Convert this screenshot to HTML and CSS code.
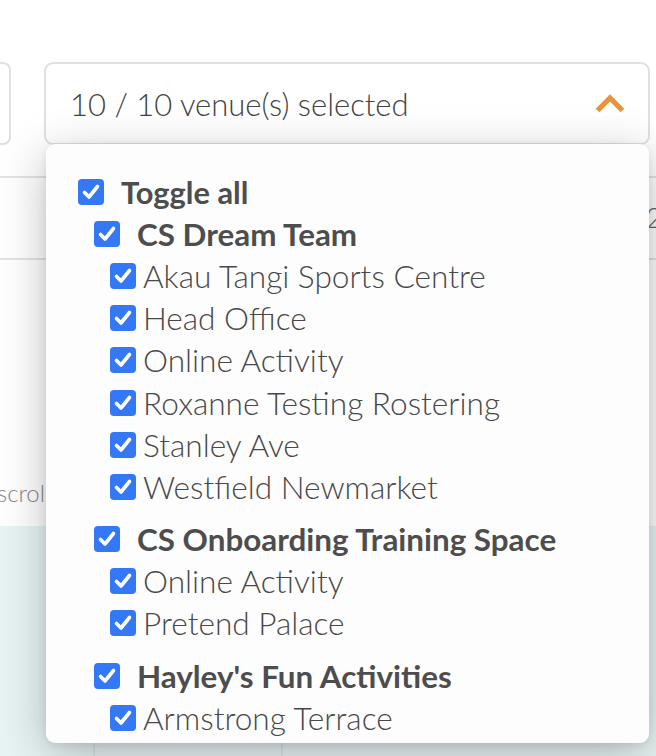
FILE: index.html
```html
<!DOCTYPE html>
<html>
<head>
<meta charset="utf-8">
<link rel="stylesheet" href="styles.css">
</head>
<body>
<div class="page">
  <div class="filters">
    <div class="left-box"></div>
    <div class="select-wrap">
      <div class="select">
        <span class="select-text">10 / 10 venue(s) selected</span>
        <svg class="chevron" width="32" height="22" viewBox="0 0 32 22"><path d="M3.5 18.5 L16 6 L28.5 18.5" fill="none" stroke="#e8943a" stroke-width="5.2" stroke-linejoin="miter" stroke-linecap="butt"/></svg>
      </div>
      <div class="dropdown">
        <div class="row level0 strong"><span class="cb"><svg viewBox="0 0 26 26"><path d="M6.5 13.5 L11 18 L19.5 7.5"/></svg></span><span class="label">Toggle all</span></div>
        <div class="row level1 strong"><span class="cb"><svg viewBox="0 0 26 26"><path d="M6.5 13.5 L11 18 L19.5 7.5"/></svg></span><span class="label">CS Dream Team</span></div>
        <div class="row level2"><span class="cb"><svg viewBox="0 0 26 26"><path d="M6.5 13.5 L11 18 L19.5 7.5"/></svg></span><span class="label">Akau Tangi Sports Centre</span></div>
        <div class="row level2"><span class="cb"><svg viewBox="0 0 26 26"><path d="M6.5 13.5 L11 18 L19.5 7.5"/></svg></span><span class="label">Head Office</span></div>
        <div class="row level2"><span class="cb"><svg viewBox="0 0 26 26"><path d="M6.5 13.5 L11 18 L19.5 7.5"/></svg></span><span class="label">Online Activity</span></div>
        <div class="row level2"><span class="cb"><svg viewBox="0 0 26 26"><path d="M6.5 13.5 L11 18 L19.5 7.5"/></svg></span><span class="label">Roxanne Testing Rostering</span></div>
        <div class="row level2"><span class="cb"><svg viewBox="0 0 26 26"><path d="M6.5 13.5 L11 18 L19.5 7.5"/></svg></span><span class="label">Stanley Ave</span></div>
        <div class="row level2"><span class="cb"><svg viewBox="0 0 26 26"><path d="M6.5 13.5 L11 18 L19.5 7.5"/></svg></span><span class="label">Westfield Newmarket</span></div>
        <div class="row level1 strong group"><span class="cb"><svg viewBox="0 0 26 26"><path d="M6.5 13.5 L11 18 L19.5 7.5"/></svg></span><span class="label">CS Onboarding Training Space</span></div>
        <div class="row level2"><span class="cb"><svg viewBox="0 0 26 26"><path d="M6.5 13.5 L11 18 L19.5 7.5"/></svg></span><span class="label">Online Activity</span></div>
        <div class="row level2"><span class="cb"><svg viewBox="0 0 26 26"><path d="M6.5 13.5 L11 18 L19.5 7.5"/></svg></span><span class="label">Pretend Palace</span></div>
        <div class="row level1 strong group"><span class="cb"><svg viewBox="0 0 26 26"><path d="M6.5 13.5 L11 18 L19.5 7.5"/></svg></span><span class="label">Hayley's Fun Activities</span></div>
        <div class="row level2"><span class="cb"><svg viewBox="0 0 26 26"><path d="M6.5 13.5 L11 18 L19.5 7.5"/></svg></span><span class="label">Armstrong Terrace</span></div>
      </div>
    </div>
  </div>
  <div class="table">
    <div class="trow thead"></div>
    <div class="trow tbody"><span class="num">2</span></div>
    <div class="trow tnote"><span class="scroll-text">scroll</span></div>
    <div class="teal">
      <div class="tcell c1"></div>
      <div class="tcell c2"></div>
      <div class="tcell c3"></div>
    </div>
  </div>
</div>
</body>
</html>
```
FILE: styles.css
```css
* { box-sizing: border-box; }
html, body { margin: 0; padding: 0; background: #ffffff; }
body {
  font-family: Lato, "Open Sans", Arial, sans-serif;
  color: #4a4a4a;
  width: 656px;
  height: 756px;
  overflow: hidden;
}
.page { position: relative; width: 656px; height: 756px; overflow: hidden; }

.filters {
  display: flex;
  gap: 33px;
  padding-top: 62px;
  position: relative;
  z-index: 2;
}
.left-box {
  width: 31px;
  height: 83px;
  margin-left: -20px;
  border: 2px solid #e0e0e0;
  border-radius: 8px;
  background: #fff;
  flex: none;
}
.select-wrap {
  position: relative;
  width: 606px;
  flex: none;
}
.select {
  height: 83px;
  border: 2px solid #e0e0e0;
  border-radius: 9px;
  background: #fff;
  display: flex;
  align-items: center;
  justify-content: space-between;
  padding: 0 22px 0 24px;
}
.select-text {
  font-size: 31px;
  font-weight: 300;
  color: #444;
  margin-top: 0px;
}
.chevron { display: block; margin-top: -2px; }

.dropdown {
  position: absolute;
  top: 82px;
  left: 2px;
  width: 603px;
  height: 599px;
  background: #fdfdfd;
  border-radius: 9px;
  box-shadow: 0 12px 48px rgba(0, 0, 0, 0.26), 0 2px 8px rgba(0,0,0,0.08);
  padding-top: 27px;
  overflow: hidden;
}
.row {
  height: 42.1px;
  display: flex;
  align-items: center;
}
.row.group { margin-top: 10.5px; }
.level0 { padding-left: 32px; }
.level1 { padding-left: 48px; }
.level2 { padding-left: 64px; }
.cb {
  width: 26px;
  height: 26px;
  border-radius: 4px;
  background: #3478f6;
  flex: none;
  display: block;
}
.cb svg {
  display: block;
  width: 26px;
  height: 26px;
}
.cb path {
  fill: none;
  stroke: #fff;
  stroke-width: 3.6;
  stroke-linecap: round;
  stroke-linejoin: round;
}
.label {
  font-size: 31.6px;
  font-weight: 300;
  color: #484848;
  white-space: nowrap;
  margin-left: 7px;
}
.strong .label {
  font-weight: 700;
  font-size: 31.4px;
  color: #4d4d4d;
  margin-left: 17px;
}
.level0.strong .label { font-size: 30.8px; }

.table {
  position: relative;
  z-index: 1;
}
.trow { position: relative; }
.thead {
  height: 33px;
  border-bottom: 2px solid #e3e3e3;
}
.tbody {
  height: 82px;
  border-bottom: 2px solid #e3e3e3;
}
.num {
  position: absolute;
  left: 646px;
  top: 22px;
  font-size: 28px;
  font-weight: 300;
  color: #666;
}
.tnote {
  height: 266px;
}
.scroll-text {
  position: absolute;
  left: -3px;
  top: 218px;
  font-size: 24px;
  font-weight: 300;
  color: #888;
}
.teal {
  height: 240px;
  background: #e8f4f4;
  display: grid;
  grid-template-columns: 95px 188px 1fr;
}
.tcell { border-right: 2px solid #dde6e6; }
.tcell.c3 { border-right: none; }
```
